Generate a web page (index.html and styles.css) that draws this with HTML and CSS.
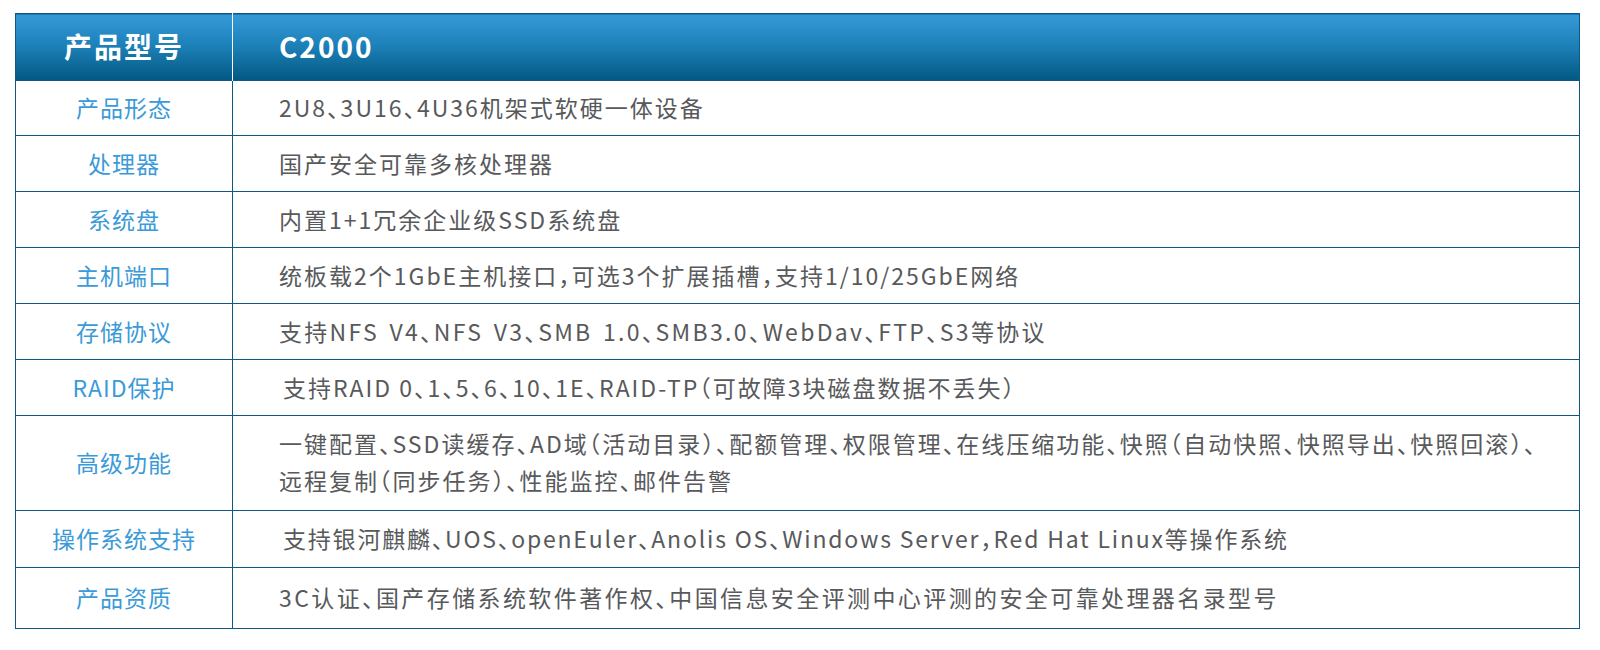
FILE: index.html
```html
<!DOCTYPE html>
<html lang="zh-CN">
<head>
<meta charset="utf-8">
<title>C2000 产品参数</title>
<link rel="stylesheet" href="styles.css">
</head>
<body>
<div class="wrap">
<table class="spec">
  <colgroup><col class="c-label"><col class="c-value"></colgroup>
  <thead>
    <tr class="head">
      <th class="h-label">产品型号</th>
      <th class="h-value">C2000</th>
    </tr>
  </thead>
  <tbody>
    <tr class="r55"><td class="label">产品形态</td><td class="value">2U8、3U16、4U36机架式软硬一体设备</td></tr>
    <tr class="r56"><td class="label">处理器</td><td class="value">国产安全可靠多核处理器</td></tr>
    <tr class="r56"><td class="label">系统盘</td><td class="value">内置1+1冗余企业级SSD系统盘</td></tr>
    <tr class="r56"><td class="label">主机端口</td><td class="value">统板载2个1GbE主机接口，可选3个扩展插槽，支持1/10/25GbE网络</td></tr>
    <tr class="r56"><td class="label">存储协议</td><td class="value wide-sp">支持NFS V4、NFS V3、SMB 1.0、SMB3.0、WebDav、FTP、S3等协议</td></tr>
    <tr class="r56"><td class="label">RAID保护</td><td class="value indent">支持RAID 0、1、5、6、10、1E、RAID-TP（可故障3块磁盘数据不丢失）</td></tr>
    <tr class="r95"><td class="label">高级功能</td><td class="value multi">一键配置、SSD读缓存、AD域（活动目录）、配额管理、权限管理、在线压缩功能、快照（自动快照、快照导出、快照回滚）、<br>远程复制（同步任务）、性能监控、邮件告警</td></tr>
    <tr class="r57"><td class="label">操作系统支持</td><td class="value indent tight">支持银河麒麟、UOS、openEuler、Anolis OS、Windows Server，Red Hat Linux等操作系统</td></tr>
    <tr class="r61"><td class="label">产品资质</td><td class="value loose">3C认证、国产存储系统软件著作权、中国信息安全评测中心评测的安全可靠处理器名录型号</td></tr>
  </tbody>
</table>
</div>
</body>
</html>
```

FILE: styles.css
```css
html, body {
  margin: 0;
  padding: 0;
  background: #ffffff;
}

.wrap {
  padding: 13px 0 0 15px;
}

.spec {
  width: 1565px;
  border-collapse: collapse;
  table-layout: fixed;
  font-family: "Noto Sans CJK SC", "Noto Sans", sans-serif;
  border: 1px solid #0f5883;
}

.c-label { width: 217px; }

.head th {
  height: 64px;
  padding: 0 0 2px 0;
  color: #ffffff;
  font-size: 28px;
  font-weight: 700;
  letter-spacing: 2px;
  background: linear-gradient(to bottom, #369ad7 0%, #1d82ba 45%, #035883 100%);
  border: none;
}

.h-label {
  text-align: center;
  border-right: 1px solid #ffffff !important;
}

.h-value {
  text-align: left;
  padding-left: 46px !important;
  letter-spacing: 1px;
}

.spec td {
  border: 1px solid #0f5883;
  padding: 0 0 2px 0;
  vertical-align: middle;
}

.label {
  text-align: center;
  color: #3b9ad8;
  font-size: 23px;
  letter-spacing: 1px;
}

.value {
  text-align: left;
  color: #58595b;
  font-size: 23px;
  letter-spacing: 2px;
  padding-left: 46px !important;
  font-feature-settings: "halt";
  white-space: nowrap;
}

.indent { padding-left: 50px !important; }
.wide-sp { word-spacing: 3px; letter-spacing: 2.3px; }
.tight { letter-spacing: 1.8px; }
.loose { letter-spacing: 2.4px; }

.multi { line-height: 37px; }

.r55 td { height: 52px; }
.r56 td { height: 53px; }
.r57 td { height: 54px; }
.r61 td { height: 58px; }
.r95 td { height: 92px; }
```
